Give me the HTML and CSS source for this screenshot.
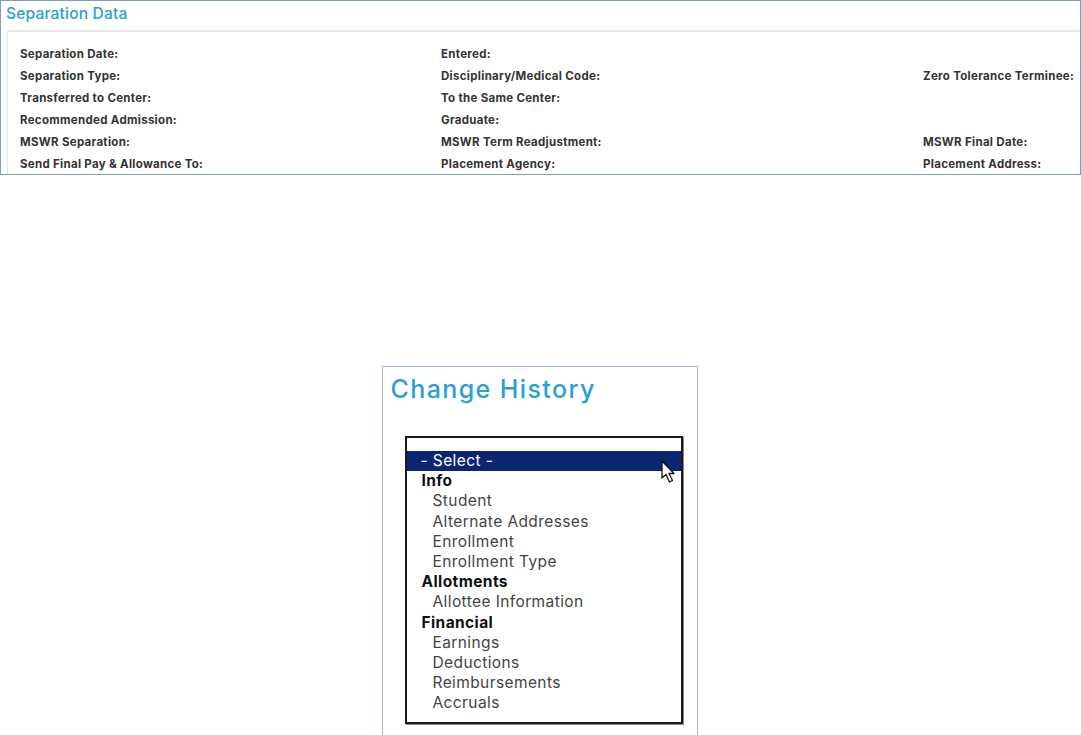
FILE: index.html
```html
<!DOCTYPE html>
<html lang="en">
<head>
    <meta charset="UTF-8">
    <meta name="viewport" content="width=device-width, initial-scale=1.0">
    <title>Separation Data</title>
    <link rel="stylesheet" href="styles.css">
</head>
<body>
    <div class="panel">
        <h2 class="panel-title">Separation Data</h2>
        <div class="panel-body">
            <div class="field">Separation Date:</div>
            <div class="field">Entered:</div>
            <div class="field"></div>
            <div class="field">Separation Type:</div>
            <div class="field">Disciplinary/Medical Code:</div>
            <div class="field">Zero Tolerance Terminee:</div>
            <div class="field">Transferred to Center:</div>
            <div class="field">To the Same Center:</div>
            <div class="field"></div>
            <div class="field">Recommended Admission:</div>
            <div class="field">Graduate:</div>
            <div class="field"></div>
            <div class="field">MSWR Separation:</div>
            <div class="field">MSWR Term Readjustment:</div>
            <div class="field">MSWR Final Date:</div>
            <div class="field">Send Final Pay &amp; Allowance To:</div>
            <div class="field">Placement Agency:</div>
            <div class="field">Placement Address:</div>
        </div>
    </div>

    <div class="history">
        <h2 class="history-title">Change History</h2>
        <div class="listbox">
            <div class="list-blank"></div>
            <div class="list-row selected">- Select -</div>
            <div class="list-row group">Info</div>
            <div class="list-row item">Student</div>
            <div class="list-row item">Alternate Addresses</div>
            <div class="list-row item">Enrollment</div>
            <div class="list-row item">Enrollment Type</div>
            <div class="list-row group">Allotments</div>
            <div class="list-row item">Allottee Information</div>
            <div class="list-row group">Financial</div>
            <div class="list-row item">Earnings</div>
            <div class="list-row item">Deductions</div>
            <div class="list-row item">Reimbursements</div>
            <div class="list-row item">Accruals</div>

            <svg class="cursor" width="16" height="25" viewBox="0 0 16 25">
                <path d="M1 1 L1 18 L5 14.5 L8.5 22 L11.5 20.5 L8 13.5 L13 13.5 Z" fill="#fff" stroke="#111" stroke-width="1.3" stroke-linejoin="round"/>
            </svg>
        </div>
    </div>
</body>
</html>
```

FILE: styles.css
```css
body {
    margin: 0;
    background-color: #fff;
    font-family: Inter, "Open Sans", sans-serif;
}
.panel {
    height: 173px;
    border: 1px solid #7f9db9;
    box-sizing: content-box;
}
.panel-title {
    margin: 0;
    height: 29px;
    padding: 3px 0 0 5px;
    box-sizing: border-box;
    font-size: 15.5px;
    font-weight: 500;
    letter-spacing: 0.2px;
    color: #2a9fd6;
}
.panel-body {
    margin-left: 6px;
    height: 144px;
    border-top: 2px solid #e6e6e6;
    border-left: 1px solid #e6e6e6;
    padding: 11px 0 0 12px;
    box-sizing: border-box;
    display: grid;
    grid-template-columns: 421px 482px 1fr;
    grid-auto-rows: 22px;
}
.field {
    font-size: 11.5px;
    font-weight: 700;
    letter-spacing: 0.3px;
    color: #333;
    line-height: 22px;
    white-space: nowrap;
}
.history {
    width: 306px;
    height: 366px;
    margin: 191px auto 0;
    border: 1px solid #9fb6cf;
    padding: 9px 0 0 8px;
    box-sizing: content-box;
    position: relative;
    left: -1px;
}
.history-title {
    margin: 0;
    font-size: 25px;
    font-weight: 500;
    color: #2a9fd6;
    letter-spacing: 1.4px;
    line-height: 26px;
}
.listbox {
    position: relative;
    width: 274px;
    height: 284px;
    margin: 34px 0 0 14px;
    border: 2px solid #1a1a1a;
    box-shadow: 1px 1px 0 #888;
    background-color: #fff;
}
.list-blank {
    height: 13px;
}
.list-row {
    height: 20.2px;
    line-height: 20px;
    font-size: 15.5px;
    letter-spacing: 0.4px;
    white-space: nowrap;
}
.selected {
    background-color: #0c2570;
    color: #fff;
    padding-left: 14px;
}
.group {
    font-weight: 700;
    color: #111;
    padding-left: 15px;
}
.item {
    color: #444;
    padding-left: 26px;
}
.cursor {
    position: absolute;
    left: 254px;
    top: 22px;
}
```
